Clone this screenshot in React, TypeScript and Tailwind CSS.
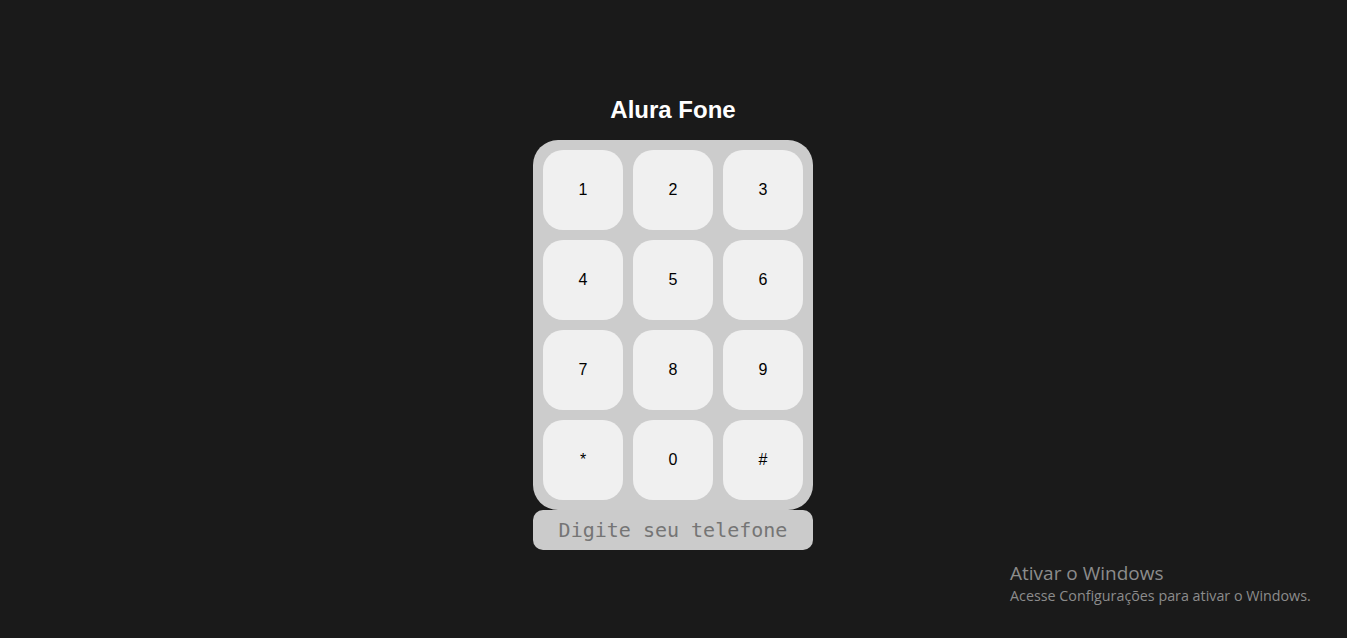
const keys = ['1', '2', '3', '4', '5', '6', '7', '8', '9', '*', '0', '#'];

export default function App() {
  return (
    <div className="relative h-[638px] w-full overflow-hidden bg-[#1a1a1a] font-['Liberation_Sans',Arial,sans-serif]">
      <div className="flex flex-col items-center pr-[1px] pt-[96px]">
        <h1 className="h-[28px] text-[24px] font-bold leading-[28px] text-white">Alura Fone</h1>

        {/* Keypad */}
        <div className="mt-[16px] grid w-[280px] grid-cols-3 gap-[10px] rounded-[25px] bg-[#cccccc] p-[10px]">
          {keys.map((k) => (
            <button
              key={k}
              className="flex h-[80px] w-[80px] items-center justify-center rounded-[20px] bg-[#f0f0f0] text-[16px] text-black"
            >
              {k}
            </button>
          ))}
        </div>

        <input
          type="tel"
          placeholder="Digite seu telefone"
          className="h-[40px] w-[280px] rounded-[10px] bg-[#cbcbcb] text-center font-['DejaVu_Sans_Mono',monospace] text-[20px] text-[#333] outline-none placeholder:text-[#757575]"
        />
      </div>

      {/* Windows activation watermark */}
      <div className="absolute left-[1010px] top-[560px] font-['Open_Sans','Noto_Sans',sans-serif] text-[#8c8c8c]">
        <p className="text-[19px] leading-[26px]">Ativar o Windows</p>
        <p className="text-[14.3px] leading-[20px]">Acesse Configurações para ativar o Windows.</p>
      </div>
    </div>
  );
}
